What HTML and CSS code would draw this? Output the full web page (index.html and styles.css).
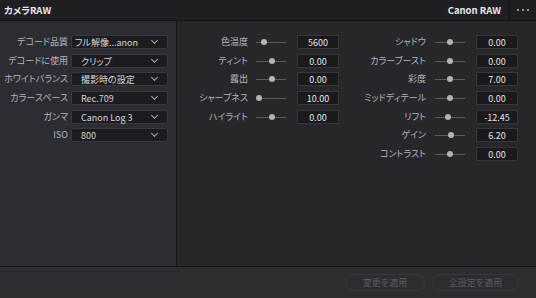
FILE: index.html
```html
<!DOCTYPE html>
<html>
<head>
  <meta charset="UTF-8">
  <title>カメラRAW</title>
  <link rel="stylesheet" href="styles.css">
</head>
<body>
  <div class="header">
    <div class="title">カメラRAW</div>
    <div class="brand">Canon RAW</div>
    <div class="menu"><span></span><span></span><span></span></div>
  </div>
  <div class="main">
    <div class="decode">
      <div class="label">デコード品質</div>
      <div class="select select-long">フル解像...anon<i class="chev"></i></div>
      <div class="label">デコードに使用</div>
      <div class="select">クリップ<i class="chev"></i></div>
      <div class="label">ホワイトバランス</div>
      <div class="select">撮影時の設定<i class="chev"></i></div>
      <div class="label">カラースペース</div>
      <div class="select">Rec.709<i class="chev"></i></div>
      <div class="label">ガンマ</div>
      <div class="select">Canon Log 3<i class="chev"></i></div>
      <div class="label">ISO</div>
      <div class="select">800<i class="chev"></i></div>
    </div>
    <div class="params">
      <div class="col col-a">
        <div class="label">色温度</div>
        <div class="slider"><span class="knob" style="left: 8px"></span></div>
        <div class="value">5600</div>
        <div class="label">ティント</div>
        <div class="slider"><span class="knob" style="left: 16px"></span></div>
        <div class="value">0.00</div>
        <div class="label">露出</div>
        <div class="slider"><span class="knob" style="left: 16px"></span></div>
        <div class="value">0.00</div>
        <div class="label">シャープネス</div>
        <div class="slider"><span class="knob" style="left: 3px"></span></div>
        <div class="value">10.00</div>
        <div class="label">ハイライト</div>
        <div class="slider"><span class="knob" style="left: 16px"></span></div>
        <div class="value">0.00</div>
      </div>
      <div class="col col-b">
        <div class="label">シャドウ</div>
        <div class="slider"><span class="knob" style="left: 15px"></span></div>
        <div class="value">0.00</div>
        <div class="label">カラーブースト</div>
        <div class="slider"><span class="knob" style="left: 15px"></span></div>
        <div class="value">0.00</div>
        <div class="label">彩度</div>
        <div class="slider"><span class="knob" style="left: 15px"></span></div>
        <div class="value">7.00</div>
        <div class="label">ミッドディテール</div>
        <div class="slider"><span class="knob" style="left: 15px"></span></div>
        <div class="value">0.00</div>
        <div class="label">リフト</div>
        <div class="slider"><span class="knob" style="left: 13px"></span></div>
        <div class="value">-12.45</div>
        <div class="label">ゲイン</div>
        <div class="slider"><span class="knob" style="left: 16px"></span></div>
        <div class="value">6.20</div>
        <div class="label">コントラスト</div>
        <div class="slider"><span class="knob" style="left: 15px"></span></div>
        <div class="value">0.00</div>
      </div>
    </div>
  </div>
  <div class="footer">
    <div class="btn btn-apply">変更を適用</div>
    <div class="btn btn-all">全設定を適用</div>
  </div>
</body>
</html>
```

FILE: styles.css
```css
html, body { margin: 0; padding: 0; }
body { width: 536px; height: 298px; overflow: hidden; background: #2c2d31; font-family: "Noto Sans CJK JP", "Noto Sans", sans-serif; font-size: 9px; font-feature-settings: "palt"; color: #b4b4b8; }

.header { height: 20px; display: flex; align-items: center; background: #1f1f23; border-bottom: 1px solid #141416; }
.title { padding-left: 4px; font-weight: bold; font-size: 9.5px; color: #e6e6e8; flex: 1; }
.brand { font-weight: bold; font-size: 9.5px; color: #e6e6e8; padding-right: 8px; height: 20px; line-height: 20px; border-right: 1px solid #141416; }
.menu { width: 26px; display: flex; justify-content: center; gap: 3px; }
.menu span { width: 2px; height: 2px; border-radius: 50%; background: #b8b8bc; }

.main { display: flex; height: 245px; border-bottom: 1px solid #151517; }

.decode { box-sizing: border-box; width: 177px; border-right: 1px solid #17171a; background: #2c2d32; padding: 14px 0 0 4px; display: grid; grid-template-columns: 64px 97px; column-gap: 3px; row-gap: 4.67px; align-content: start; }
.label { text-align: right; height: 14px; line-height: 14px; white-space: nowrap; color: #b6b6ba; }
.select { position: relative; height: 14px; line-height: 13px; box-sizing: border-box; background: #1c1c1f; border: 1px solid #38383d; border-radius: 2px; padding-left: 9px; color: #d6d6da; white-space: nowrap; }
.select-long { padding-left: 3px; }
.chev { position: absolute; right: 10px; top: 2px; width: 4px; height: 4px; border-right: 1px solid #a8a8ac; border-bottom: 1px solid #a8a8ac; transform: rotate(45deg); }

.params { flex: 1; background: #27272b; display: flex; padding: 14px 0 0 5px; gap: 11px; }
.col { display: grid; row-gap: 4.67px; align-content: start; }
.col-a { grid-template-columns: 66px 8px 30px 11px 42px; }
.col-b { grid-template-columns: 76px 9px 30px 11px 42px; }
.col .label { grid-column: 1; }
.slider { grid-column: 3; position: relative; height: 14px; }
.slider::before { content: ""; position: absolute; left: 0; right: 0; top: 7px; height: 1px; background: #59595e; }
.knob { position: absolute; top: 4px; width: 6px; height: 6px; margin-left: -3px; border-radius: 50%; background: #b4b4b8; }
.value { grid-column: 5; height: 14px; line-height: 13px; box-sizing: border-box; background: #1a1a1d; border: 1px solid #36363b; text-align: center; color: #e4e4e8; }

.footer { height: 32px; display: flex; justify-content: flex-end; align-items: flex-start; gap: 7px; padding: 7px 17px 0 0; box-sizing: border-box; background: #2c2d31; }
.btn { height: 17px; line-height: 16px; box-sizing: border-box; border: 1px solid #37373c; border-radius: 9px; text-align: center; color: #5c5c61; font-size: 9px; }
.btn-apply { width: 80px; }
.btn-all { width: 87px; }
```
